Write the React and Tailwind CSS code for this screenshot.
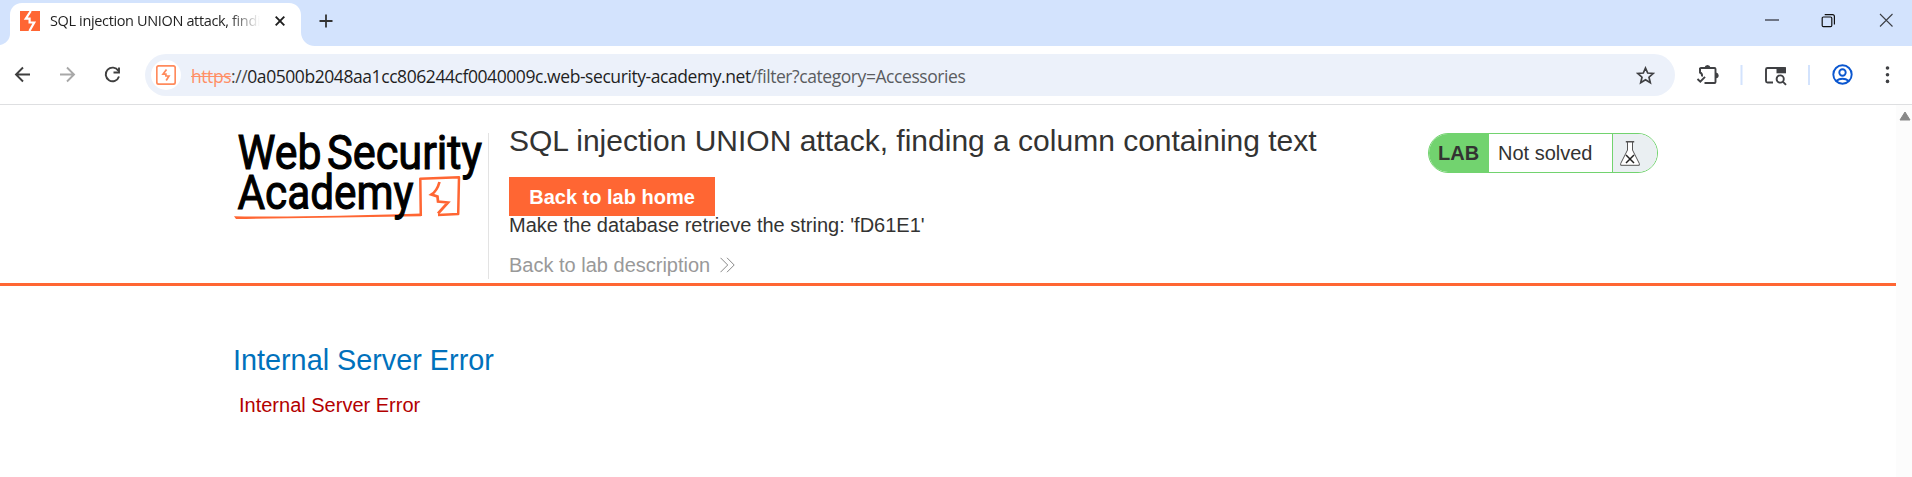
const UI = "font-['Open_Sans','Noto_Sans',sans-serif]";

function BoltTab() {
  return (
    <svg className="h-5 w-5 shrink-0" viewBox="0 0 20 20">
      <rect width="20" height="20" fill="#ff6633" />
      <path d="M10.8 0 5.8 7.600H9.6V11.500H14.200L9.4 20" fill="none" stroke="#fff" strokeWidth="2.2" />
    </svg>
  );
}

function SiteBadge() {
  return (
    <span className="flex h-[30px] w-[30px] shrink-0 items-center justify-center rounded-full bg-white">
      <svg className="h-5 w-5" viewBox="0 0 20 20" fill="none" stroke="#ff8a5c">
        <rect x="0.8" y="0.8" width="18.4" height="18.4" rx="2" strokeWidth="1.7" />
        <path d="M10.5 4.500 7 9.200H9.900V11H13L10.200 15.500" strokeWidth="1.7" />
      </svg>
    </span>
  );
}

function Tab() {
  return (
    <div className="flex h-[46px] items-end">
      <svg className="h-[46px] w-[315px] shrink-0" viewBox="0 0 315 46">
        <path d="M0 46V45C6 44 10 39 10 34V15C10 8 15 3 22 3H289C296 3 301 8 301 15V32C301 40 307 46 315 46Z" fill="#fff" />
      </svg>
      <div className={"-ml-[315px] flex h-[46px] w-[315px] items-center pl-5 pb-[4px] " + UI}>
        <BoltTab />
        <span className="ml-[10px] w-[210px] overflow-hidden bg-gradient-to-r from-[#1f1f1f] from-85% to-transparent bg-clip-text text-[14.500px] leading-5 tracking-[-0.360px] whitespace-nowrap text-transparent">
          SQL injection UNION attack, finding
        </span>
        <svg className="ml-[15px] h-[10px] w-[10px]" viewBox="0 0 10 10" fill="none" stroke="#1f1f1f" strokeWidth="1.9">
          <path d="M.7.7 9.3 9.3M9.3.7.7 9.3" />
        </svg>
      </div>
      <svg className="mb-[18px] ml-[4px] h-[14px] w-[14px]" viewBox="0 0 14 14" fill="none" stroke="#333" strokeWidth="1.8">
        <path d="M7 .5V13.5M.5 7H13.5" />
      </svg>
    </div>
  );
}

function WindowButtons() {
  return (
    <svg className="mt-[13px] mr-[18px] h-[15px] w-[129px]" viewBox="0 0 129 15" fill="none" stroke="#3c3f45">
      <path d="M0 7H14" stroke="#555a66" strokeWidth="1.6" />
      <rect x="57.2" y="4" width="9.6" height="9.6" rx="1.2" stroke="#111" strokeWidth="1.2" />
      <path d="M59.7 1.6H67.5Q69.4 1.6 69.4 3.5V11.4" stroke="#111" strokeWidth="1.2" />
      <path d="M115 1 127.500 13.500M127.500 1 115 13.500" strokeWidth="1.100" />
    </svg>
  );
}

function NavIcons() {
  return (
    <svg className="h-[58px] w-[145px] shrink-0" viewBox="0 46 145 58" fill="none" stroke="#3f3f3f" strokeWidth="1.9">
      <path d="M30 74.500H16.500M23 67.500 16 74.500 23 81.500" />
      <path d="M60 74.500H73.500M67 67.500 74 74.500 67 81.500" stroke="#a8a8a8" />
      <path d="M118.300 70.800A6.800 6.800 0 1 0 119 76.500M119 67.500V72.500H113.500" />
    </svg>
  );
}

function ToolbarIcons() {
  return (
    <svg className="h-[58px] w-[237px] shrink-0" viewBox="1675 46 237 58" fill="none" stroke="#3f4043" strokeWidth="1.9">
      <path d="M1700 71.500V69Q1700 68 1701 68H1714.500Q1715.500 68 1715.500 69V82Q1715.500 83 1714.500 83H1704.500" />
      <path d="M1700 68V72.500Q1702.500 73.500 1702 76.500" />
      <path d="M1697.500 79 1700.300 81.700 1705 76.800" />
      <path d="M1704.500 67.500Q1705 65 1707.500 65T1710.500 67.500ZM1716 72.500Q1718.700 73 1718.700 75.500T1716 78.300Z" fill="#3f4043" stroke="none" />
      <path d="M1741.500 65V85M1809 65V85" stroke="#d3e3fd" strokeWidth="2" />
      <path d="M1773 82.500H1767.500Q1766 82.500 1766 81V69.500Q1766 68 1767.500 68H1784Q1785 68 1785 69V72.500" />
      <path d="M1776.500 67.200H1786V73.300H1776.500Z" fill="#3f4043" stroke="none" />
      <circle cx="1780.200" cy="79" r="3.600" />
      <path d="M1782.800 81.700 1786 84.900" />
      <g stroke="#0b57d0">
        <circle cx="1842.500" cy="74.500" r="9.200" />
        <circle cx="1842.500" cy="72.500" r="3.200" />
        <path d="M1836 81Q1842.500 76.500 1849 81" />
      </g>
      <g fill="#3f4043" stroke="none">
        <circle cx="1887.500" cy="68" r="1.800" />
        <circle cx="1887.500" cy="74.700" r="1.800" />
        <circle cx="1887.500" cy="81.400" r="1.800" />
      </g>
    </svg>
  );
}

function Toolbar() {
  return (
    <div className="flex h-[59px] items-center border-b border-[#dedfe1] bg-white">
      <NavIcons />
      <div className={"flex h-[42px] flex-1 items-center rounded-full bg-[#ecf1fa] pl-[6px] " + UI}>
        <SiteBadge />
        <div className="ml-[10px] flex pt-px text-[17.500px] leading-6 tracking-[-0.430px] whitespace-nowrap text-[#1f1f1f]">
          <span className="text-[#ff8f66] line-through">https</span>
          <span className="text-[#474747]">://</span>
          <span>0a0500b2048aa1cc806244cf0040009c.web-security-academy.net</span>
          <span className="text-[#5a5c60]">/filter?category=Accessories</span>
        </div>
        <svg className="mr-[20px] ml-auto h-[19px] w-[19px]" viewBox="0 0 19 19" fill="none" stroke="#3f4043" strokeWidth="1.700">
          <path d="M9.500 2 11.700 7 17.200 7.500 13 11.200 14.300 16.700 9.500 13.800 4.700 16.700 6 11.200 1.800 7.500 7.300 7Z" />
        </svg>
      </div>
      <ToolbarIcons />
    </div>
  );
}

function AcademyLogo() {
  return (
    <svg className="h-[90px] w-[254px] overflow-visible" viewBox="234 133 254 90">
      <path d="M234 216.200Q300 217.600 421 213.600V216.200Q330 217.500 236 219Z" fill="#ff6633" />
      <path d="M420.800 216 420.300 178.800 459 177.300 458.200 214 438 215" fill="none" stroke="#ff6633" strokeWidth="2.500" strokeLinejoin="round" />
      <path d="M439.500 182 Q437 191 431.500 194.500L437.500 196.500 438 201.500 448 202.500 438 213.500" fill="none" stroke="#ff6633" strokeWidth="2.700" />
      <g className="font-['Roboto',sans-serif] font-normal" fontSize="48" fill="#000" stroke="#000" strokeWidth="1.100">
        <text x="237.500" y="168.700" textLength="84" lengthAdjust="spacingAndGlyphs">Web</text>
        <text x="327" y="168.700" textLength="155" lengthAdjust="spacingAndGlyphs">Security</text>
        <text x="237.500" y="209.200" textLength="176" lengthAdjust="spacingAndGlyphs">Academy</text>
      </g>
    </svg>
  );
}

function LabStatus() {
  return (
    <div className="flex h-10 w-[230px] overflow-hidden rounded-full border border-[#72d36f] bg-white text-[20px] leading-[39px] text-[#333332]">
      <span className="w-[60px] bg-[#72d36f] pl-[9px] font-bold">LAB</span>
      <span className="w-[123px] pl-[9px]">Not solved</span>
      <span className="flex flex-1 border-l border-[#72d36f] bg-[#eaeff2] pt-[7px] pl-[7px]">
        <svg className="h-[25px] w-[20px]" viewBox="0 0 20 25" fill="none" stroke="#555">
          <path d="M7.500 1V9L.700 22.500V24.300H19.300V22.500L12.500 9V1" fill="#fff" strokeWidth="1" />
          <path d="M5.800 .800H14.200" strokeWidth="1.400" />
          <path d="M6 14 14 22M14 14 6 22" stroke="#222" strokeWidth="1.500" />
        </svg>
      </span>
    </div>
  );
}

export default function App() {
  return (
    <div className="flex h-[477px] w-[1912px] flex-col overflow-hidden bg-white font-['Liberation_Sans',Arial,sans-serif] text-[#333332]">
      <div className="flex h-[46px] justify-between bg-[#d3e3fd]">
        <Tab />
        <WindowButtons />
      </div>
      <Toolbar />
      <div className="flex flex-1">
        <main className="flex-1">
          <header className="flex h-[181px] border-b-[3px] border-[#ff6633] pl-[234px]">
            <div className="mt-7 h-[146px] w-[255px] border-r border-[#e3e3e3]">
              <AcademyLogo />
            </div>
            <div className="flex flex-1 flex-col items-start pt-[18px] pl-5 text-[20px] whitespace-nowrap">
              <h1 className="text-[30px] leading-9">SQL injection UNION attack, finding a column containing text</h1>
              <button className="mt-[18px] h-[39px] w-[206px] bg-[#ff6633] text-center font-bold text-white">Back to lab home</button>
              <p className="leading-[18px]">Make the database retrieve the string: 'fD61E1'</p>
              <a className="mt-[19px] flex items-center leading-6 text-[#999]">
                Back to lab description
                <svg className="ml-[10px] h-[16px] w-[15px]" viewBox="0 0 15 16" fill="none" stroke="#888" strokeWidth="1">
                  <path d="M.500 .800 7.700 8 .500 15.200M7 .800 14.200 8 7 15.200" />
                </svg>
              </a>
            </div>
            <div className="mt-7 mr-[238px]">
              <LabStatus />
            </div>
          </header>
          <section className="pt-[56px] pl-[233px]">
            <h2 className="text-[28.800px] leading-9 text-[#0071bc]">Internal Server Error</h2>
            <p className="mt-[15px] pl-[6px] text-[20px] leading-6 text-[#b30000]">Internal Server Error</p>
          </section>
        </main>
        <div className="w-4 bg-[#fcfcfc] pt-[6px] pl-[3px]">
          <svg className="h-[10px] w-[12px]" viewBox="0 0 12 10">
            <path d="M6 1 11 9H1Z" fill="#888" stroke="#888" strokeLinejoin="round" />
          </svg>
        </div>
      </div>
    </div>
  );
}
